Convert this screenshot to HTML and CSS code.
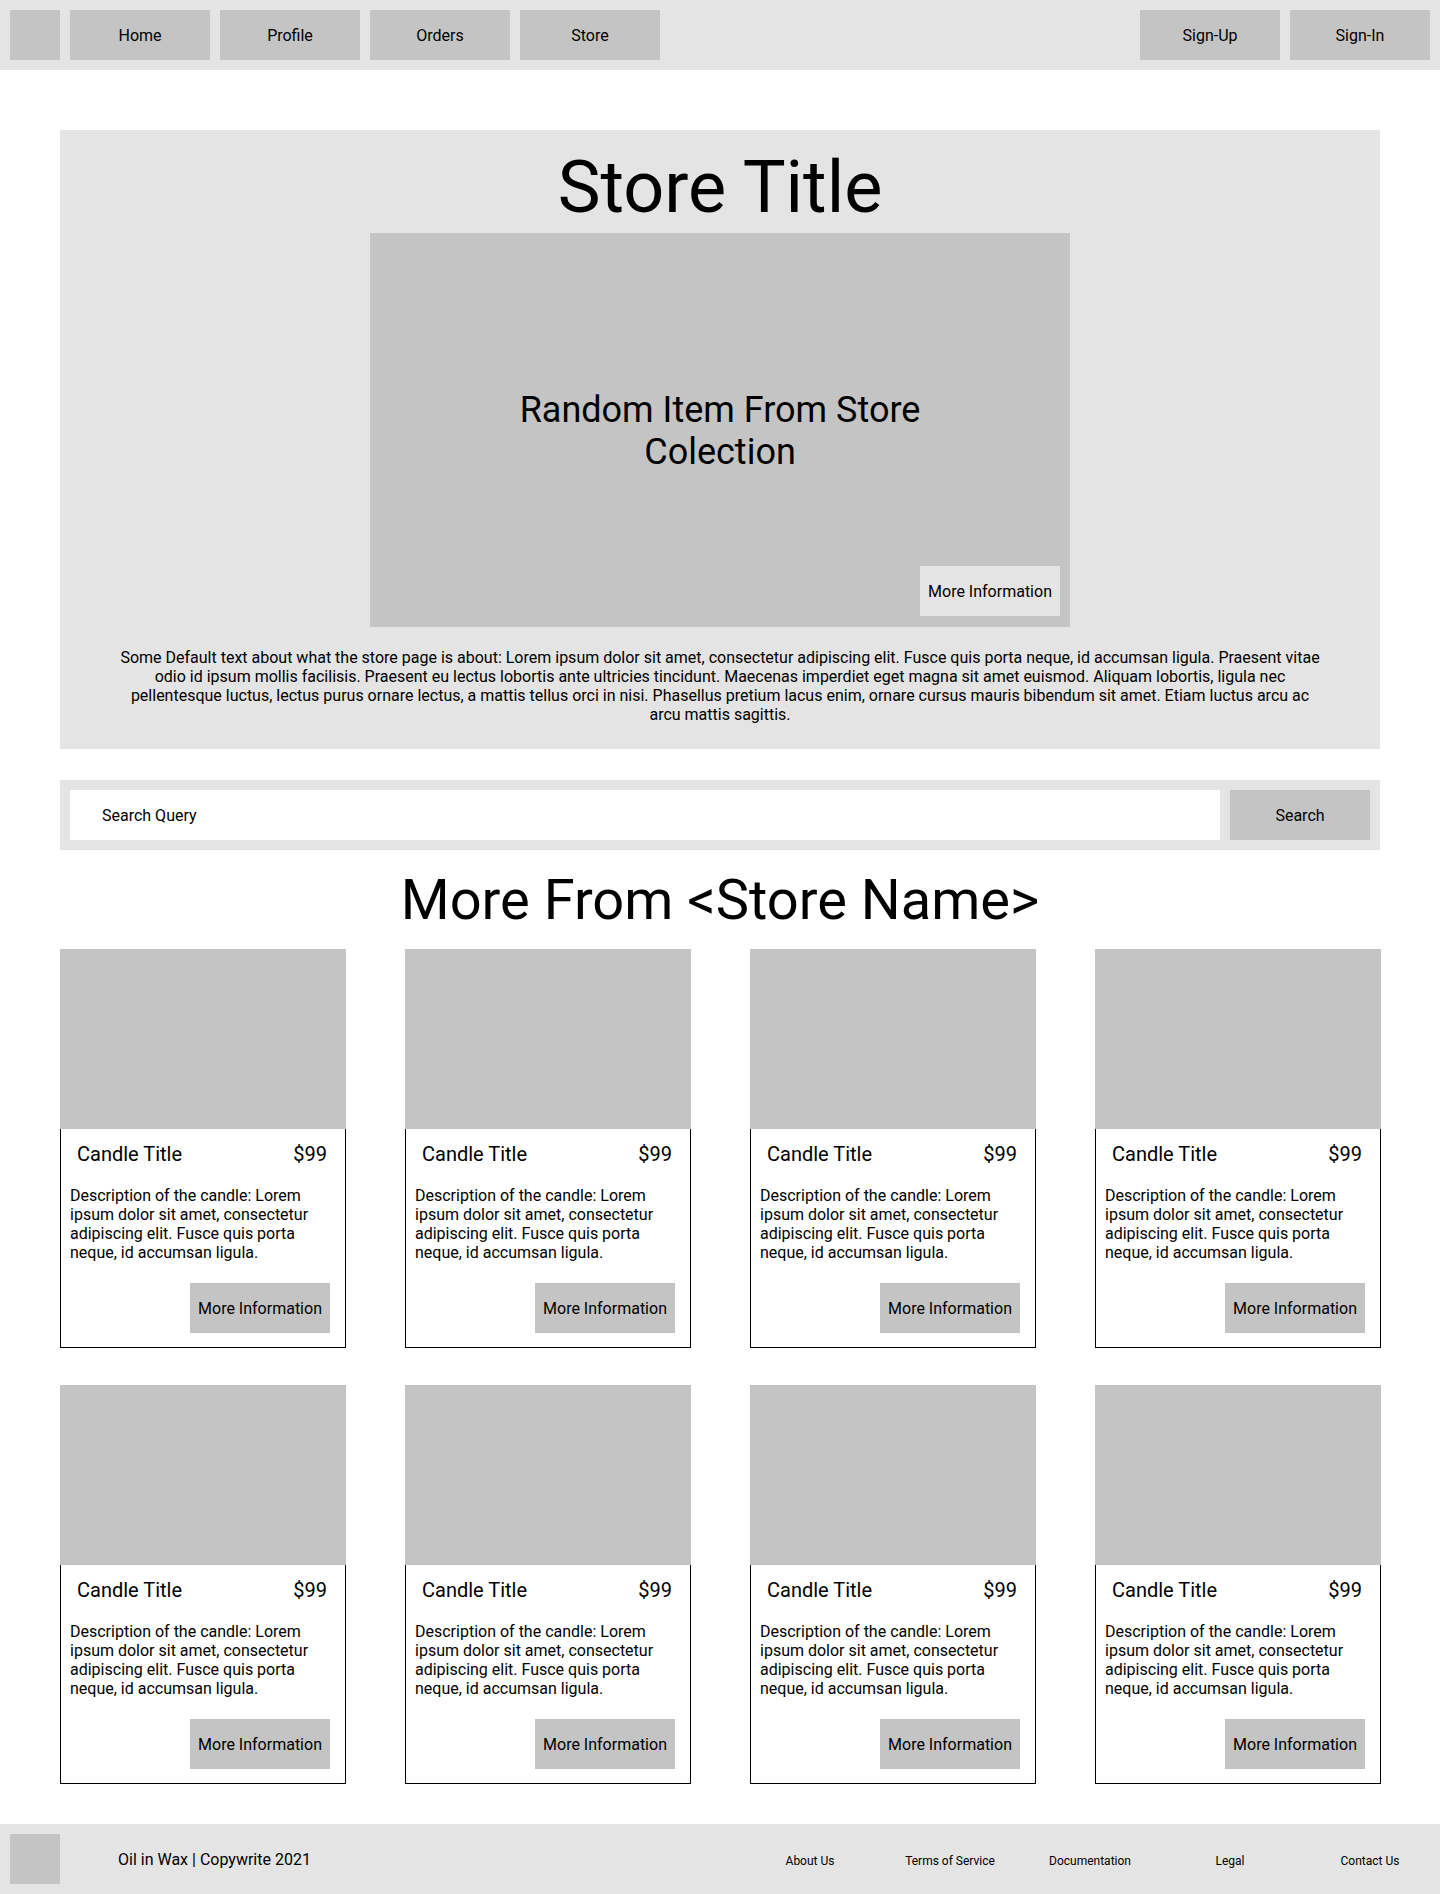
FILE: index.html
```html
<!DOCTYPE html>
<html lang="en">
<head>
<meta charset="utf-8">
<title>Store</title>
<link rel="stylesheet" href="styles.css">
</head>
<body>
<header class="nav">
  <div class="nav-logo"></div>
  <a class="nav-btn">Home</a>
  <a class="nav-btn">Profile</a>
  <a class="nav-btn">Orders</a>
  <a class="nav-btn">Store</a>
  <div class="nav-right">
    <a class="nav-btn">Sign-Up</a>
    <a class="nav-btn">Sign-In</a>
  </div>
</header>

<main class="main">
  <section class="hero">
    <h1 class="hero-title">Store Title</h1>
    <div class="hero-image">
      <p class="hero-item">Random Item From Store Colection</p>
      <a class="hero-more">More Information</a>
    </div>
    <p class="hero-text">Some Default text about what the store page is about: Lorem ipsum dolor sit amet, consectetur adipiscing elit. Fusce quis porta neque, id accumsan ligula. Praesent vitae odio id ipsum mollis facilisis. Praesent eu lectus lobortis ante ultricies tincidunt. Maecenas imperdiet eget magna sit amet euismod. Aliquam lobortis, ligula nec pellentesque luctus, lectus purus ornare lectus, a mattis tellus orci in nisi. Phasellus pretium lacus enim, ornare cursus mauris bibendum sit amet. Etiam luctus arcu ac arcu mattis sagittis.</p>
  </section>

  <section class="search">
    <div class="search-input">Search Query</div>
    <a class="search-btn">Search</a>
  </section>

  <h2 class="more-title">More From &lt;Store Name&gt;</h2>

  <section class="grid">
    <article class="card">
      <div class="card-img"></div>
      <div class="card-body">
        <div class="card-head"><span>Candle Title</span><span>$99</span></div>
        <p class="card-desc">Description of the candle: Lorem ipsum dolor sit amet, consectetur adipiscing elit. Fusce quis porta neque, id accumsan ligula.</p>
        <a class="card-btn">More Information</a>
      </div>
    </article>
    <article class="card">
      <div class="card-img"></div>
      <div class="card-body">
        <div class="card-head"><span>Candle Title</span><span>$99</span></div>
        <p class="card-desc">Description of the candle: Lorem ipsum dolor sit amet, consectetur adipiscing elit. Fusce quis porta neque, id accumsan ligula.</p>
        <a class="card-btn">More Information</a>
      </div>
    </article>
    <article class="card">
      <div class="card-img"></div>
      <div class="card-body">
        <div class="card-head"><span>Candle Title</span><span>$99</span></div>
        <p class="card-desc">Description of the candle: Lorem ipsum dolor sit amet, consectetur adipiscing elit. Fusce quis porta neque, id accumsan ligula.</p>
        <a class="card-btn">More Information</a>
      </div>
    </article>
    <article class="card">
      <div class="card-img"></div>
      <div class="card-body">
        <div class="card-head"><span>Candle Title</span><span>$99</span></div>
        <p class="card-desc">Description of the candle: Lorem ipsum dolor sit amet, consectetur adipiscing elit. Fusce quis porta neque, id accumsan ligula.</p>
        <a class="card-btn">More Information</a>
      </div>
    </article>
    <article class="card">
      <div class="card-img"></div>
      <div class="card-body">
        <div class="card-head"><span>Candle Title</span><span>$99</span></div>
        <p class="card-desc">Description of the candle: Lorem ipsum dolor sit amet, consectetur adipiscing elit. Fusce quis porta neque, id accumsan ligula.</p>
        <a class="card-btn">More Information</a>
      </div>
    </article>
    <article class="card">
      <div class="card-img"></div>
      <div class="card-body">
        <div class="card-head"><span>Candle Title</span><span>$99</span></div>
        <p class="card-desc">Description of the candle: Lorem ipsum dolor sit amet, consectetur adipiscing elit. Fusce quis porta neque, id accumsan ligula.</p>
        <a class="card-btn">More Information</a>
      </div>
    </article>
    <article class="card">
      <div class="card-img"></div>
      <div class="card-body">
        <div class="card-head"><span>Candle Title</span><span>$99</span></div>
        <p class="card-desc">Description of the candle: Lorem ipsum dolor sit amet, consectetur adipiscing elit. Fusce quis porta neque, id accumsan ligula.</p>
        <a class="card-btn">More Information</a>
      </div>
    </article>
    <article class="card">
      <div class="card-img"></div>
      <div class="card-body">
        <div class="card-head"><span>Candle Title</span><span>$99</span></div>
        <p class="card-desc">Description of the candle: Lorem ipsum dolor sit amet, consectetur adipiscing elit. Fusce quis porta neque, id accumsan ligula.</p>
        <a class="card-btn">More Information</a>
      </div>
    </article>
  </section>
</main>

<footer class="footer">
  <div class="footer-logo"></div>
  <span class="footer-copy">Oil in Wax | Copywrite 2021</span>
  <nav class="footer-links">
    <a class="footer-link">About Us</a>
    <a class="footer-link">Terms of Service</a>
    <a class="footer-link">Documentation</a>
    <a class="footer-link">Legal</a>
    <a class="footer-link">Contact Us</a>
  </nav>
</footer>
</body>
</html>
```

FILE: styles.css
```css
* {
  box-sizing: border-box;
}

body {
  margin: 0;
  font-family: Roboto, "Liberation Sans", sans-serif;
  color: #000;
  background: #fff;
}

a {
  color: inherit;
  text-decoration: none;
}

/* Navigation */
.nav {
  height: 70px;
  background: #e4e4e4;
  padding: 10px;
  display: flex;
  gap: 10px;
}

.nav-logo {
  width: 50px;
  height: 50px;
  background: #c4c4c4;
}

.nav-btn {
  width: 140px;
  height: 50px;
  background: #c4c4c4;
  display: flex;
  align-items: center;
  justify-content: center;
  font-size: 16px;
}

.nav-right {
  margin-left: auto;
  display: flex;
  gap: 10px;
}

/* Main */
.main {
  padding: 60px 60px 0;
}

.hero {
  background: #e4e4e4;
  padding: 16px 0 25px;
}

.hero-title {
  margin: 0;
  font-size: 72px;
  font-weight: 400;
  line-height: 84px;
  text-align: center;
}

.hero-image {
  position: relative;
  width: 700px;
  height: 394px;
  margin: 3px auto 0;
  background: #c4c4c4;
  display: flex;
  align-items: center;
  justify-content: center;
}

.hero-item {
  margin: 2px 0 0;
  width: 420px;
  font-size: 36px;
  line-height: 42px;
  text-align: center;
}

.hero-more {
  position: absolute;
  right: 10px;
  bottom: 11px;
  width: 140px;
  height: 50px;
  background: #e4e4e4;
  display: flex;
  align-items: center;
  justify-content: center;
  font-size: 16px;
}

.hero-text {
  width: 1200px;
  margin: 21px auto 0;
  font-size: 16px;
  line-height: 19px;
  text-align: center;
}

/* Search */
.search {
  margin-top: 31px;
  background: #e4e4e4;
  padding: 10px;
  display: flex;
  gap: 10px;
}

.search-input {
  flex: 1;
  height: 50px;
  background: #fff;
  display: flex;
  align-items: center;
  padding-left: 32px;
  font-size: 16px;
}

.search-btn {
  width: 140px;
  height: 50px;
  background: #c4c4c4;
  display: flex;
  align-items: center;
  justify-content: center;
  font-size: 16px;
}

/* More from */
.more-title {
  margin: 17px 0 16px;
  font-size: 56px;
  font-weight: 400;
  line-height: 66px;
  text-align: center;
}

.grid {
  display: grid;
  grid-template-columns: repeat(4, 286px);
  column-gap: 59px;
  row-gap: 37px;
}

.card {
  width: 286px;
}

.card-img {
  height: 180px;
  background: #c4c4c4;
}

.card-body {
  height: 219px;
  border: 1px solid #000;
  border-top: none;
  padding: 14px 15px 14px 9px;
  display: flex;
  flex-direction: column;
}

.card-head {
  display: flex;
  justify-content: space-between;
  padding: 0 3px 0 7px;
  font-size: 20px;
  line-height: 23px;
}

.card-desc {
  margin: 20px 0 0;
  font-size: 16px;
  line-height: 19px;
}

.card-btn {
  margin-top: auto;
  align-self: flex-end;
  width: 140px;
  height: 50px;
  background: #c4c4c4;
  display: flex;
  align-items: center;
  justify-content: center;
  font-size: 16px;
}

/* Footer */
.footer {
  margin-top: 40px;
  height: 70px;
  background: #e4e4e4;
  padding: 10px 0 10px 10px;
  display: flex;
  align-items: center;
}

.footer-logo {
  width: 50px;
  height: 50px;
  background: #c4c4c4;
}

.footer-copy {
  margin-left: 58px;
  font-size: 16px;
}

.footer-links {
  margin-left: auto;
  display: flex;
  align-self: stretch;
  align-items: center;
  padding-top: 3px;
}

.footer-link {
  width: 140px;
  text-align: center;
  font-size: 12px;
}
```
